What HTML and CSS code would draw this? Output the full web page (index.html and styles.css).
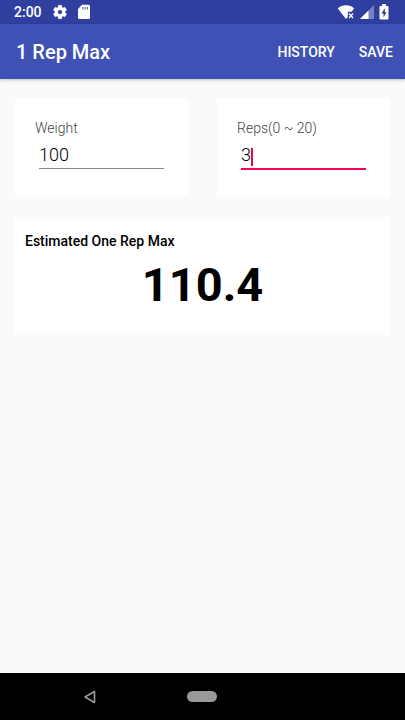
FILE: index.html
```html
<!DOCTYPE html>
<html lang="en">
<head>
<meta charset="utf-8">
<meta name="viewport" content="width=device-width, initial-scale=1">
<title>1 Rep Max</title>
<link rel="stylesheet" href="styles.css">
</head>
<body>
<div class="status-bar">
  <span class="clock">2:00</span>
  <svg class="icon-settings" width="16" height="16" viewBox="0 0 24 24" aria-hidden="true"><path fill="#fff" stroke="#fff" stroke-width=".8" d="M19.43 12.98c.04-.32.07-.64.07-.98s-.03-.66-.07-.98l2.11-1.65c.19-.15.24-.42.12-.64l-2-3.46c-.12-.22-.39-.3-.61-.22l-2.49 1c-.52-.4-1.08-.73-1.69-.98l-.38-2.65C14.46 2.18 14.25 2 14 2h-4c-.25 0-.46.18-.49.42l-.38 2.65c-.61.25-1.17.59-1.69.98l-2.49-1c-.23-.09-.49 0-.61.22l-2 3.46c-.13.22-.07.49.12.64l2.11 1.65c-.04.32-.07.65-.07.98s.03.66.07.98l-2.11 1.65c-.19.15-.24.42-.12.64l2 3.46c.12.22.39.3.61.22l2.49-1c.52.4 1.08.73 1.69.98l.38 2.65c.03.24.24.42.49.42h4c.25 0 .46-.18.49-.42l.38-2.65c.61-.25 1.17-.59 1.69-.98l2.49 1c.23.09.49 0 .61-.22l2-3.46c.12-.22.07-.49-.12-.64l-2.11-1.65zM12 15.5c-1.93 0-3.5-1.57-3.5-3.5s1.57-3.5 3.5-3.5 3.5 1.57 3.5 3.5-1.57 3.5-3.5 3.5z"/></svg>
  <svg class="icon-card" width="16" height="16" viewBox="0 0 16 16" aria-hidden="true"><path fill="#fff" d="M6 .8h6.500a1.500 1.500 0 0 1 1.500 1.500v11.200a1.500 1.500 0 0 1-1.500 1.500h-9A1.500 1.500 0 0 1 2 13.500V5z"/><path stroke="#303f9f" stroke-width=".9" d="M6.900 3v2.500M9.200 3v2.500M11.500 3v2.500"/></svg>
  <div class="status-right">
    <svg width="18" height="16" viewBox="0 0 18 16" aria-hidden="true"><path fill="#fff" d="M0.800 4.500C5 .2 13 .2 17.200 4.500L14.500 7.800H10.800V13L9 15z"/><path stroke="#fff" stroke-width="1.300" d="M12 9.500l4 4.500M16 9.500l-4 4.500"/></svg>
    <svg width="16" height="16" viewBox="0 0 16 16" aria-hidden="true"><path fill="#fff" fill-opacity=".35" d="M15 1v14H1z"/><path fill="#fff" d="M9.500 6.500V15H1z"/></svg>
    <svg width="10" height="16" viewBox="0 0 10 16" aria-hidden="true"><path fill="#fff" d="M3 0h4v2h1.500a1 1 0 0 1 1 1v11.500a1 1 0 0 1-1 1h-7a1 1 0 0 1-1-1V3a1 1 0 0 1 1-1H3z"/><path fill="#303f9f" d="M5.800 4L2.500 9.500h2V13.500L7.500 8H5.800z"/></svg>
  </div>
</div>
<header class="app-bar">
  <h1 class="title">1 Rep Max</h1>
  <button class="action" type="button">HISTORY</button>
  <button class="action" type="button">SAVE</button>
</header>
<main class="content">
  <div class="fields">
    <div class="card field">
      <label class="label" for="weight">Weight</label>
      <div class="input-wrap"><input class="input" id="weight" type="text" inputmode="decimal" value="100"></div>
    </div>
    <div class="card field">
      <label class="label" for="reps">Reps(0 ~ 20)</label>
      <div class="input-wrap active"><input class="input" id="reps" type="text" inputmode="numeric" value="3"><span class="caret"></span></div>
    </div>
  </div>
  <section class="card result">
    <h2 class="result-title">Estimated One Rep Max</h2>
    <output class="result-value" for="weight reps">110.4</output>
  </section>
</main>
<nav class="nav-bar">
  <button class="nav-button back" type="button" aria-label="Back"><svg width="14" height="14" viewBox="0 0 14 14" aria-hidden="true"><path fill="none" stroke="#999" stroke-width="1.600" stroke-linejoin="round" d="M11.500 1.500v11L2 7z"/></svg></button>
  <button class="nav-button home" type="button" aria-label="Home"></button>
</nav>
</body>
</html>
```
FILE: styles.css
```css
* { box-sizing: border-box; }

body {
  margin: 0;
  min-height: 100vh;
  display: flex;
  flex-direction: column;
  background: #fafafa;
  color: #000;
  font-family: Roboto, "Liberation Sans", sans-serif;
}

button {
  border: 0;
  padding: 0;
  background: none;
  font: inherit;
  color: inherit;
}

svg { display: block; }

.status-bar {
  display: flex;
  align-items: center;
  height: 24px;
  padding: 0 16px 0 14px;
  background: #303f9f;
  color: #fff;
}

.clock {
  font-size: 14px;
  font-weight: 500;
  line-height: 24px;
}

.icon-settings { margin-left: 10px; }
.icon-card { margin-left: 8px; }

.status-right {
  display: flex;
  align-items: center;
  gap: 4px;
  margin-left: auto;
}

.app-bar {
  display: flex;
  align-items: center;
  gap: 24px;
  height: 55px;
  padding: 0 12px 0 16px;
  background: #3f51b5;
  color: #fff;
  box-shadow: 0 1px 3px rgba(0, 0, 0, 0.25);
}

.title {
  flex: 1;
  margin: 0;
  font-size: 20px;
  font-weight: 500;
}

.action {
  font-size: 14px;
  font-weight: 500;
}

.content {
  flex: 1;
  padding: 19px 15px;
}

.fields {
  display: grid;
  grid-template-columns: 1fr 1fr;
  gap: 29px;
  margin-bottom: 20px;
}

.card { background: #fff; }

.field { padding: 20px 20px 27px; }

.label {
  display: block;
  font-size: 14px;
  font-weight: 300;
  line-height: 20px;
  color: #444;
}

.input-wrap {
  position: relative;
  margin: 0 4px;
  padding-bottom: 1px;
}

.input {
  display: block;
  width: 100%;
  height: 31px;
  padding: 4px 0 2px;
  border: 0;
  border-bottom: 1px solid #868686;
  border-radius: 0;
  outline: 0;
  background: none;
  color: #000;
  font: 300 18px/24px Roboto, "Liberation Sans", sans-serif;
}

.active { padding: 0; }

.active .input {
  height: 32px;
  border-bottom: 2px solid #f50057;
}

.caret {
  position: absolute;
  left: 10px;
  top: 10px;
  width: 2px;
  height: 18px;
  background: #f50057;
}

.result {
  padding: 14px 10px 16px;
}

.result-title {
  margin: 0;
  font-size: 14px;
  font-weight: 500;
  line-height: 20px;
}

.result-value {
  display: block;
  text-align: center;
  font-size: 47px;
  font-weight: 700;
  line-height: 68px;
}

.nav-bar {
  display: grid;
  grid-template-columns: 1fr 30px 1fr;
  align-items: center;
  height: 47px;
  padding-right: 1px;
  background: #000;
}

.nav-button { justify-self: center; }

.back { margin-right: 8px; }

.home {
  width: 30px;
  height: 11px;
  border-radius: 6px;
  background: #999;
}
```
